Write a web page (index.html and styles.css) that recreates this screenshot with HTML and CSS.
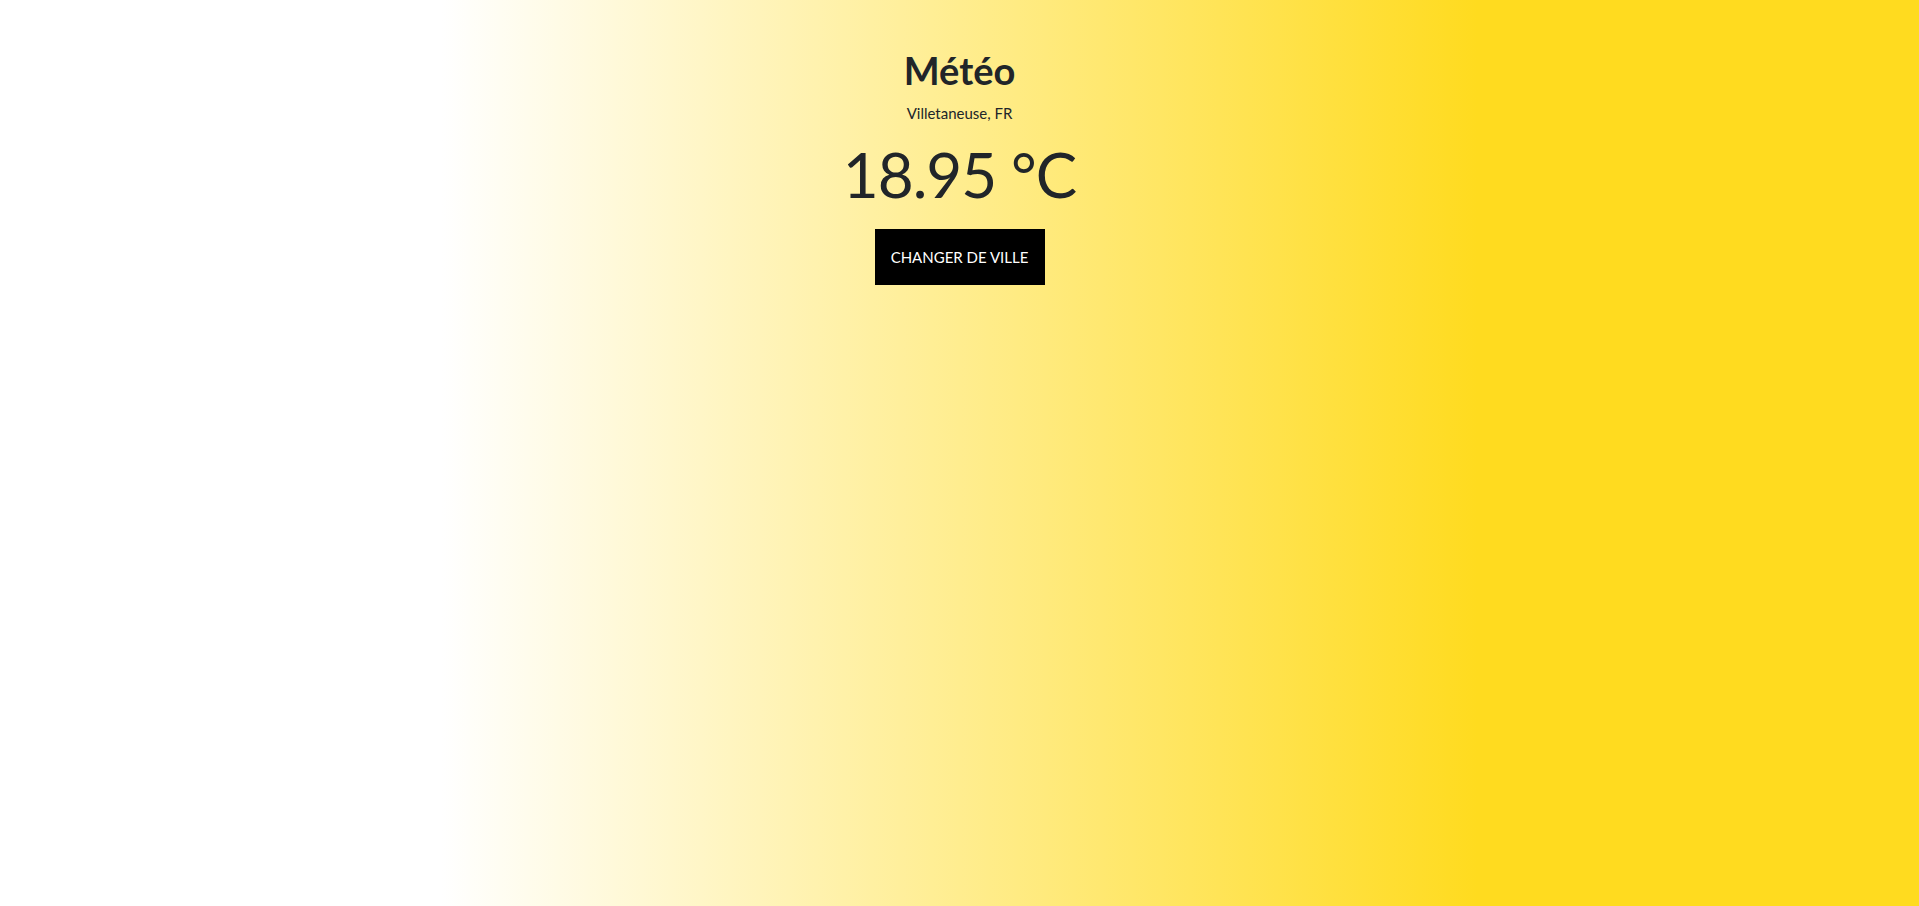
FILE: index.html
```html
<!DOCTYPE html>
<html lang="fr">
<head>
<meta charset="utf-8">
<title>Météo</title>
<link rel="stylesheet" href="styles.css">
</head>
<body>
<main class="weather">
  <h1 class="weather-title">Météo</h1>
  <p class="weather-city">Villetaneuse, FR</p>
  <div class="weather-temp">18.95 °C</div>
  <button class="weather-btn" type="button">Changer de ville</button>
</main>
</body>
</html>
```
FILE: styles.css
```css
html, body {
  margin: 0;
  height: 100%;
}
body {
  font-family: "Lato", "Open Sans", sans-serif;
  color: #212529;
  background: linear-gradient(to right, #ffffff 23%, #ffdb1f 77%);
  min-height: 100vh;
}
.weather {
  display: flex;
  flex-direction: column;
  align-items: center;
  padding-top: 48px;
}
.weather-title {
  margin: 0;
  font-size: 38px;
  font-weight: 700;
  line-height: 1.2;
}
.weather-city {
  margin: 8px 0 0;
  font-size: 15px;
  line-height: 1.5;
}
.weather-temp {
  margin-top: 10px;
  font-size: 62px;
  font-weight: 400;
  letter-spacing: -1px;
  line-height: 80px;
}
.weather-btn {
  margin-top: 15px;
  width: 170px;
  height: 56px;
  background: #000;
  color: #fff;
  border: 0;
  border-radius: 0;
  font-family: inherit;
  font-size: 15px;
  text-transform: uppercase;
  cursor: pointer;
}
```
